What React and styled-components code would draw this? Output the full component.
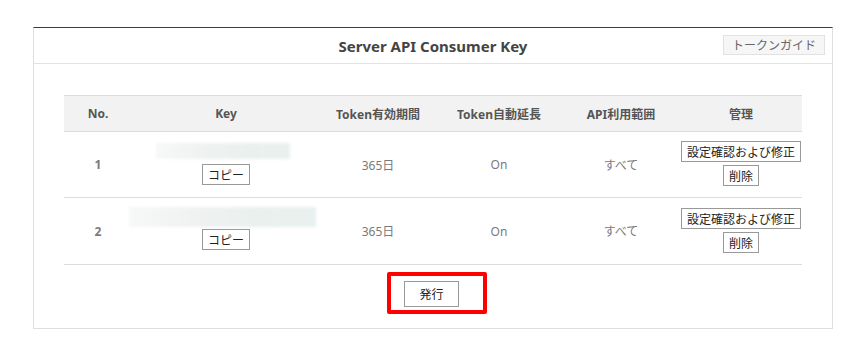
import React from "react";
import styled, { createGlobalStyle } from "styled-components";

const Global = createGlobalStyle`
  html, body { margin: 0; padding: 0; background: #fff; }
  body {
    font-family: "Noto Sans", "Noto Sans CJK JP", sans-serif;
    color: #666;
  }
  * { box-sizing: border-box; }
`;

const Page = styled.div`
  padding: 27px 0 0 33px;
`;

const Panel = styled.section`
  width: 800px;
  border: 1px solid #dedede;
  border-top: 1px solid #3c3c3c;
  background: #fff;
`;

const PanelHeader = styled.header`
  position: relative;
  height: 36px;
  border-bottom: 1px solid #e2e2e2;
  display: flex;
  align-items: center;
  justify-content: center;
`;

const Title = styled.h2`
  margin: 0;
  font-size: 15px;
  font-weight: 700;
  color: #444;
  line-height: 20px;
`;

const GuideButton = styled.button`
  position: absolute;
  right: 7px;
  top: 7px;
  height: 20px;
  padding: 0 8px;
  border: 1px solid #e2e2e2;
  background: #f6f6f6;
  color: #666;
  font-family: "Noto Sans CJK JP", sans-serif;
  font-size: 12px;
  line-height: 18px;
  cursor: pointer;
`;

const Body = styled.div`
  padding: 31px 30px 21px;
  display: flex;
  flex-direction: column;
  align-items: center;
`;

const Table = styled.table`
  width: 738px;
  border-collapse: collapse;
  table-layout: fixed;
`;

const Th = styled.th`
  height: 36px;
  background: #f2f2f2;
  border-top: 1px solid #dcdcdc;
  border-bottom: 1px solid #dcdcdc;
  font-size: 12px;
  font-weight: 700;
  color: #555;
  padding: 0;
  text-align: center;
  vertical-align: middle;
  font-family: "Noto Sans", "Noto Sans CJK JP", sans-serif;
`;

const Td = styled.td`
  height: ${(p) => p.$h || 66}px;
  border-bottom: 1px solid #dcdcdc;
  text-align: center;
  vertical-align: middle;
  font-size: 12px;
  color: #7a7a7a;
  font-weight: ${(p) => (p.$bold ? 700 : 400)};
  padding: 0;
  font-family: "Noto Sans", "Noto Sans CJK JP", sans-serif;
`;

const Stack = styled.div`
  display: flex;
  flex-direction: column;
  align-items: center;
  gap: ${(p) => p.$gap || 3}px;
  margin-bottom: ${(p) => p.$mb || 0}px;
`;

const Blur = styled.div`
  width: ${(p) => p.$w}px;
  height: ${(p) => p.$h}px;
  background: linear-gradient(90deg, #f7f8f8 0%, #eef1f0 40%, #eaf0ee 70%, #e8f1ef 100%);
  filter: blur(1.5px);
  margin-left: ${(p) => p.$ml || 0}px;
`;

const SmallButton = styled.button`
  height: 21px;
  padding: 0 5px;
  border: 1px solid #999;
  background: #fff;
  color: #222;
  font-family: "Noto Sans CJK JP", sans-serif;
  font-size: 12px;
  line-height: 19px;
  cursor: pointer;
`;

const IssueWrap = styled.div`
  position: relative;
  margin-top: 16px;
  margin-left: -3px;
`;

const IssueButton = styled.button`
  width: 55px;
  height: 26px;
  padding: 0;
  border: 1px solid #999;
  background: #fff;
  color: #222;
  font-family: "Noto Sans CJK JP", sans-serif;
  font-size: 12px;
  line-height: 24px;
  cursor: pointer;
`;

const Highlight = styled.span`
  position: absolute;
  left: -17px;
  top: -9px;
  width: 100px;
  height: 42px;
  border: 4px solid #ff0000;
  border-radius: 2px;
  pointer-events: none;
`;

const widths = [68, 188, 116, 126, 118, 122];
const headers = ["No.", "Key", "Token有効期間", "Token自動延長", "API利用範囲", "管理"];

const rows = [
  { no: 1, blurW: 134, blurH: 16, blurMl: -6, h: 66, gap: 5, mb: 2 },
  { no: 2, blurW: 187, blurH: 20, blurMl: -7, h: 67, gap: 2, mb: 5 },
];

export default function App() {
  return (
    <>
      <Global />
      <Page>
        <Panel>
          <PanelHeader>
            <Title>Server API Consumer Key</Title>
            <GuideButton>トークンガイド</GuideButton>
          </PanelHeader>
          <Body>
            <Table>
              <colgroup>
                {widths.map((w, i) => (
                  <col key={i} style={{ width: w }} />
                ))}
              </colgroup>
              <thead>
                <tr>
                  {headers.map((h) => (
                    <Th key={h}>{h}</Th>
                  ))}
                </tr>
              </thead>
              <tbody>
                {rows.map((r) => (
                  <tr key={r.no}>
                    <Td $bold $h={r.h}>{r.no}</Td>
                    <Td $h={r.h}>
                      <Stack $gap={r.gap} $mb={r.mb}>
                        <Blur $w={r.blurW} $h={r.blurH} $ml={r.blurMl} />
                        <SmallButton>コピー</SmallButton>
                      </Stack>
                    </Td>
                    <Td $h={r.h}>365日</Td>
                    <Td $h={r.h}>On</Td>
                    <Td $h={r.h}>すべて</Td>
                    <Td $h={r.h}>
                      <Stack $mb={2}>
                        <SmallButton>設定確認および修正</SmallButton>
                        <SmallButton>削除</SmallButton>
                      </Stack>
                    </Td>
                  </tr>
                ))}
              </tbody>
            </Table>
            <IssueWrap>
              <IssueButton>発行</IssueButton>
              <Highlight />
            </IssueWrap>
          </Body>
        </Panel>
      </Page>
    </>
  );
}
